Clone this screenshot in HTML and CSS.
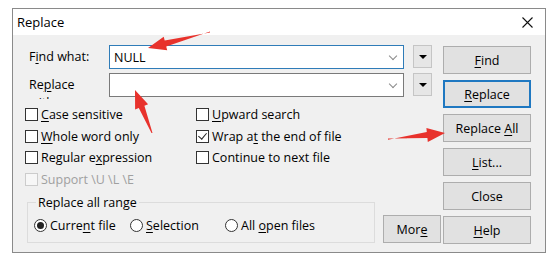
FILE: index.html
```html
<!DOCTYPE html>
<html lang="en">
<head>
    <meta charset="UTF-8">
    <title>Replace</title>
    <link rel="stylesheet" href="styles.css">
</head>
<body>
    <div class="dialog">
        <div class="titlebar">
            <span>Replace</span>
            <svg class="close-x" width="11" height="11" viewBox="0 0 11 11">
                <path d="M0.5 0.5 L10.5 10.5 M10.5 0.5 L0.5 10.5" stroke="#111" stroke-width="1.1"/>
            </svg>
        </div>
        <div class="content">
            <div class="main">
                <div class="field-row">
                    <label class="field-label">F<u>i</u>nd what:</label>
                    <div class="combo focused">
                        <span class="combo-text">NULL</span>
                        <span class="chevron"></span>
                    </div>
                    <div class="drop-btn"><span class="tri"></span></div>
                </div>
                <div class="field-row">
                    <label class="field-label clip">Re<u>p</u>lace<br>with:</label>
                    <div class="combo">
                        <span class="combo-text"></span>
                        <span class="chevron"></span>
                    </div>
                    <div class="drop-btn"><span class="tri"></span></div>
                </div>

                <div class="options">
                    <label class="check"><span class="box"></span><span><u>C</u>ase sensitive</span></label>
                    <label class="check"><span class="box"></span><span><u>U</u>pward search</span></label>
                    <label class="check"><span class="box"></span><span><u>W</u>hole word only</span></label>
                    <label class="check"><span class="box checked"></span><span>Wrap a<u>t</u> the end of file</span></label>
                    <label class="check"><span class="box"></span><span>Regular e<u>x</u>pression</span></label>
                    <label class="check"><span class="box"></span><span>Continue to next file</span></label>
                    <label class="check disabled"><span class="box"></span><span>Support \U \L \E</span></label>
                </div>

                <div class="bottom-row">
                    <fieldset class="range">
                        <legend>Replace all range</legend>
                        <label class="radio radio-first"><span class="dot on"></span><span>Curre<u>n</u>t file</span></label>
                        <label class="radio radio-second"><span class="dot"></span><span><u>S</u>election</span></label>
                        <label class="radio"><span class="dot"></span><span>All <u>o</u>pen files</span></label>
                    </fieldset>
                    <button class="btn more-btn">Mor<u>e</u></button>
                </div>
            </div>

            <div class="buttons">
                <button class="btn"><u>F</u>ind</button>
                <button class="btn default"><u>R</u>eplace</button>
                <button class="btn">Replace <u>A</u>ll</button>
                <button class="btn"><u>L</u>ist...</button>
                <button class="btn">Close</button>
                <button class="btn"><u>H</u>elp</button>
            </div>
        </div>
    </div>

    <!-- red annotation arrows drawn over the screenshot -->
    <svg class="arrows" width="559" height="272" viewBox="0 0 559 272">
        <polygon points="210,31.5 166.2,46.4 167.2,50.3 148,48 163.7,36.7 164.7,40.6 210,32.5"/>
        <polygon points="152.5,133 144.4,105.7 148.1,104.2 135,90 135.1,109.4 138.8,107.9 151.5,133"/>
        <polygon points="388,138.5 427.4,137.9 427.8,141.9 445,133 426.4,127.9 426.8,131.9 388,139.8"/>
    </svg>
</body>
</html>
```

FILE: styles.css
```css
body {
    margin: 0;
    background: #ffffff;
    font-family: "Open Sans", "Liberation Sans", sans-serif;
    font-size: 12.5px;
    color: #000;
}
u {
    text-decoration: underline;
    text-underline-offset: 2px;
}
.dialog {
    margin: 8px 0 0 12px;
    width: 532px;
    height: 243px;
    border: 1px solid #8a8a8a;
    background: #f0f0f0;
}
.titlebar {
    height: 26px;
    background: #ffffff;
    display: flex;
    align-items: center;
    justify-content: space-between;
    padding: 0 12px 0 4px;
    font-size: 13px;
}
.close-x {
    margin-top: 1px;
}
.content {
    display: flex;
    padding: 10px 0 0 0;
}
.main {
    width: 430px;
}
.field-row {
    display: flex;
    align-items: flex-start;
    height: 24px;
    margin-bottom: 4px;
}
.field-label {
    width: 80px;
    padding-left: 16px;
    line-height: 24px;
    font-size: 12.5px;
    flex: none;
}
.field-label.clip {
    line-height: 18px;
    padding-top: 3px;
    height: 23px;
    overflow: hidden;
}
.combo {
    width: 295px;
    height: 24px;
    box-sizing: border-box;
    border: 1px solid #7a7a7a;
    background: #fff;
    display: flex;
    align-items: center;
    justify-content: space-between;
    padding: 0 7px 0 4px;
    font-size: 12.5px;
}
.combo.focused {
    border-color: #2f7cb8;
}
.chevron {
    width: 5px;
    height: 5px;
    border-right: 1px solid #8a8a8a;
    border-bottom: 1px solid #8a8a8a;
    transform: rotate(45deg);
    margin-top: -3px;
}
.drop-btn {
    width: 19px;
    height: 23px;
    box-sizing: border-box;
    margin-left: 9px;
    border: 1px solid #c5c5c5;
    background: #e6e6e6;
    display: flex;
    align-items: center;
    justify-content: center;
}
.tri {
    width: 0;
    height: 0;
    border-left: 4px solid transparent;
    border-right: 4px solid transparent;
    border-top: 4px solid #000;
}
.options {
    display: grid;
    grid-template-columns: 171px 200px;
    grid-auto-rows: 21.5px;
    margin-top: 7px;
    padding-left: 12px;
}
.check, .radio {
    display: flex;
    align-items: center;
    white-space: nowrap;
    font-size: 12.5px;
}
.box {
    width: 13px;
    height: 13px;
    box-sizing: border-box;
    border: 1px solid #333;
    background: #fff;
    margin-right: 3px;
    position: relative;
    flex: none;
}
.box.checked::after {
    content: "";
    position: absolute;
    left: 3px;
    top: 0px;
    width: 4px;
    height: 7px;
    border-right: 1px solid #222;
    border-bottom: 1px solid #222;
    transform: rotate(40deg);
}
.check.disabled {
    color: #a0a0a0;
}
.check.disabled .box {
    border-color: #cccccc;
    background: #f7f7f7;
}
.bottom-row {
    display: flex;
    align-items: flex-end;
    margin-top: 4px;
}
.range {
    margin: 0 0 0 14px;
    width: 348px;
    height: 49px;
    box-sizing: border-box;
    border: 1px solid #dcdcdc;
    padding: 6px 0 0 6px;
    display: flex;
    align-items: flex-start;
}
.range legend {
    padding: 0 2px;
    margin-left: 2px;
    font-size: 12.5px;
}
.radio-first {
    width: 96px;
}
.radio-second {
    width: 95px;
}
.dot {
    width: 13px;
    height: 13px;
    box-sizing: border-box;
    border: 1px solid #333;
    border-radius: 50%;
    background: #fff;
    margin-right: 3px;
    position: relative;
    flex: none;
}
.dot.on::after {
    content: "";
    position: absolute;
    left: 2px;
    top: 2px;
    width: 7px;
    height: 7px;
    border-radius: 50%;
    background: #222;
}
.buttons {
    display: flex;
    flex-direction: column;
    gap: 6px;
    padding-top: 1px;
}
.btn {
    width: 88px;
    height: 28px;
    box-sizing: border-box;
    border: 1px solid #adadad;
    background: #e1e1e1;
    font-family: "Open Sans", "Liberation Sans", sans-serif;
    font-size: 12.5px;
    color: #000;
    padding: 0;
}
.btn.default {
    border: 2px solid #1f78c1;
}
.more-btn {
    width: 58px;
    margin-left: 8px;
}
.arrows {
    position: absolute;
    left: 0;
    top: 0;
    pointer-events: none;
}
.arrows polygon {
    fill: #e8322c;
}
```
